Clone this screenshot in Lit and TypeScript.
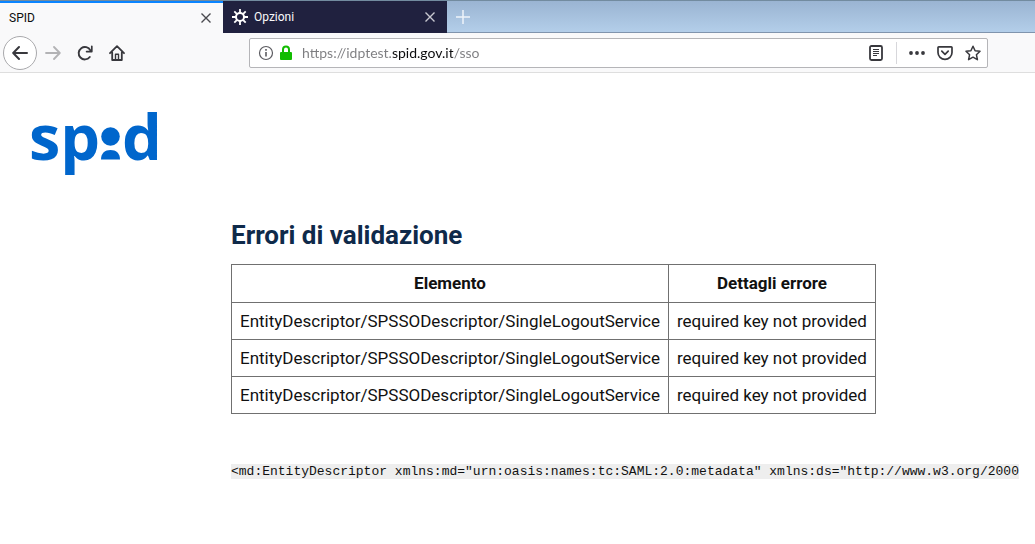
import { LitElement, html, css } from "lit";
import { customElement, state } from "lit/decorators.js";

const closeIcon = html`<svg width="12" height="12" viewBox="0 0 12 12" fill="none" stroke="currentColor" stroke-width="1.4" aria-hidden="true">
  <path d="M1.5 1.5l9 9M10.5 1.5l-9 9" />
</svg>`;

@customElement("browser-tabs")
export class BrowserTabs extends LitElement {
  static styles = css`
    :host {
      display: block;
    }
    .strip {
      display: flex;
      height: 33px;
      box-sizing: border-box;
      border-top: 1px solid #728b9f;
      background: linear-gradient(#9ab4d2, #b4cfea);
      box-shadow: inset 0 -1px #8094ad;
      font: 12px/16px Roboto, sans-serif;
    }
    .tab {
      display: flex;
      align-items: center;
      flex: 0 1 224px;
      box-sizing: border-box;
      gap: 6px;
      padding: 0 11px 0 9px;
      background: #20213f;
      color: #f9f9fa;
    }
    .active {
      flex-basis: 223px;
      border-top: 2px solid #0a84ff;
      background: #f9f9fa;
      color: #0c0c0d;
    }
    .title {
      flex: 1;
    }
    button {
      display: flex;
      padding: 0;
      border: 0;
      background: none;
      color: #4a4a4f;
    }
    .tab:not(.active) button {
      color: #c8c8d0;
    }
    .strip .add {
      align-items: center;
      padding: 0 8px;
      color: #eef4fa;
    }
  `;

  render() {
    return html`<nav class="strip" aria-label="Schede">
      <div class="tab active">
        <span class="title">SPID</span>
        <button aria-label="Chiudi scheda SPID">${closeIcon}</button>
      </div>
      <div class="tab">
        <svg width="16" height="16" viewBox="0 0 16 16" fill="none" stroke="#fff" stroke-width="2" aria-hidden="true">
          <circle cx="8" cy="8" r="4" />
          <path stroke-width="1.8" d="M8 0v4M8 12v4M0 8h4M12 8h4M2.3 2.3l2.5 2.5M11.2 11.2l2.5 2.5M13.7 2.3l-2.5 2.5M4.8 11.2l-2.5 2.5" />
        </svg>
        <span class="title">Opzioni</span>
        <button aria-label="Chiudi scheda Opzioni">${closeIcon}</button>
      </div>
      <button class="add" aria-label="Nuova scheda">
        <svg width="16" height="16" viewBox="0 0 16 16" stroke="currentColor" stroke-width="1.5" aria-hidden="true">
          <path d="M8 1v14M1 8h14" />
        </svg>
      </button>
    </nav>`;
  }
}

@customElement("browser-toolbar")
export class BrowserToolbar extends LitElement {
  @state() private address = "https://idptest.spid.gov.it/sso";

  static styles = css`
    :host {
      display: block;
    }
    .bar {
      display: flex;
      align-items: center;
      height: 40px;
      padding: 0 47px 0 3px;
      border-bottom: 1px solid #dedede;
      background: #f9f9fa;
      box-sizing: border-box;
      color: #38383d;
    }
    .nav {
      display: flex;
      align-items: center;
      gap: 16px;
      flex: 0 0 246px;
    }
    button {
      display: flex;
      align-items: center;
      justify-content: center;
      padding: 0;
      border: 0;
      background: none;
      color: inherit;
    }
    .back {
      width: 34px;
      height: 34px;
      margin-right: -8px;
      box-sizing: border-box;
      border: 1px solid #a9a9ac;
      border-radius: 50%;
      background: #fff;
    }
    .forward {
      color: #b3b3b5;
    }
    .field {
      display: flex;
      align-items: center;
      flex: 1;
      gap: 4px;
      height: 30px;
      padding: 0 6px 0 8px;
      box-sizing: border-box;
      border: 1px solid #b5b5b8;
      border-radius: 2px;
      background: #fff;
    }
    .address {
      flex: 1;
      min-width: 0;
      margin-left: 4px;
      padding: 0;
      border: 0;
      outline: 0;
      font: 14px/20px Lato, sans-serif;
      color: transparent;
      caret-color: #0c0c0d;
      background: linear-gradient(90deg, #7d7d80 89px, #0c0c0d 89px 151px, #7d7d80 151px);
      -webkit-background-clip: text;
      background-clip: text;
    }
    .actions {
      display: flex;
      align-items: center;
      gap: 12px;
    }
    .divider {
      width: 1px;
      height: 22px;
      background: #d7d7db;
    }
  `;

  render() {
    return html`<div class="bar">
      <div class="nav">
        <button class="back" aria-label="Indietro">
          <svg width="16" height="16" viewBox="0 0 16 16" fill="none" stroke="currentColor" stroke-width="2" stroke-linecap="round" stroke-linejoin="round"><path d="M15 8H1.5M7 2L1.2 8L7 14" /></svg>
        </button>
        <button class="forward" aria-label="Avanti">
          <svg width="16" height="16" viewBox="0 0 16 16" fill="none" stroke="currentColor" stroke-width="1.8" stroke-linecap="round" stroke-linejoin="round"><path d="M1 8h13.5M9 2l5.8 6L9 14" /></svg>
        </button>
        <button aria-label="Ricarica">
          <svg width="16" height="16" viewBox="0 0 16 16" fill="none" stroke="currentColor" stroke-width="1.9" stroke-linecap="round"><path d="M12.8 12A6.2 6.2 0 1 1 13.4 5.4" /><path d="M14.8 1.3V6.600H9.600" stroke-linejoin="round" stroke-width="1.7" /></svg>
        </button>
        <button aria-label="Pagina iniziale">
          <svg width="16" height="16" viewBox="0 0 16 16" fill="none" stroke="currentColor" stroke-width="1.8" stroke-linecap="round" stroke-linejoin="round"><path d="M1 8.2L8 1.2L15 8.2M3.2 7.5V15H12.8V7.5" /><path d="M6.5 15V9.2H9.5V15" stroke-width="1.4" /></svg>
        </button>
      </div>
      <div class="field">
        <svg width="16" height="16" viewBox="0 0 16 16" fill="none" stroke="#5b5b60" aria-hidden="true"><circle cx="8" cy="8" r="6.5" stroke-width="1.2" /><path d="M8 7v4.5M8 4v1.7" stroke-width="1.6" /></svg>
        <svg width="16" height="16" viewBox="0 0 16 16" fill="none" aria-hidden="true"><path d="M5 8V4.500a3 3 0 0 1 6 0V8" stroke="#12bc00" stroke-width="2" /><rect x="2" y="7" width="12" height="8" rx="1" fill="#12bc00" /></svg>
        <input
          class="address"
          type="text"
          aria-label="Indirizzo"
          spellcheck="false"
          .value=${this.address}
          @input=${(e: Event) => (this.address = (e.target as HTMLInputElement).value)}
        />
        <div class="actions">
          <button aria-label="Modalità lettura">
            <svg width="16" height="16" viewBox="0 0 16 16" fill="none" stroke="currentColor"><rect x="2" y="1" width="12" height="14" rx="1.500" stroke-width="1.8" /><path d="M5 4.500h6M5 6.500h6M5 8.500h6M5 10.500h4" /></svg>
          </button>
          <span class="divider"></span>
          <button aria-label="Azioni">
            <svg width="16" height="16" viewBox="0 0 16 16" fill="currentColor"><circle cx="2" cy="8" r="1.900" /><circle cx="8" cy="8" r="1.900" /><circle cx="14" cy="8" r="1.900" /></svg>
          </button>
          <button aria-label="Salva in Pocket">
            <svg width="16" height="16" viewBox="0 0 16 16" fill="none" stroke="currentColor" stroke-width="1.7" stroke-linecap="round" stroke-linejoin="round"><path d="M1 2.500Q1 1.800 1.800 1.800H14.200Q15 1.800 15 2.500V7.500A7 6.800 0 0 1 1 7.500Z" /><path d="M4.800 6.200L8 9.300L11.200 6.200" /></svg>
          </button>
          <button aria-label="Aggiungi ai segnalibri">
            <svg width="16" height="16" viewBox="0 0 16 16" fill="none" stroke="currentColor" stroke-width="1.5" stroke-linejoin="round"><path d="M8 1.200L10.100 5.700L15 6.300L11.400 9.700L12.400 14.700L8 12.200L3.600 14.700L4.600 9.700L1 6.300L5.900 5.700Z" /></svg>
          </button>
        </div>
      </div>
    </div>`;
  }
}

interface ValidationError {
  element: string;
  detail: string;
}

@customElement("app-root")
export class AppRoot extends LitElement {
  private errors: ValidationError[] = Array.from({ length: 3 }, () => ({
    element: "EntityDescriptor/SPSSODescriptor/SingleLogoutService",
    detail: "required key not provided",
  }));

  private metadata =
    '<md:EntityDescriptor xmlns:md="urn:oasis:names:tc:SAML:2.0:metadata" xmlns:ds="http://www.w3.org/2000';

  static styles = css`
    :host {
      display: block;
      min-height: 100vh;
      overflow: hidden;
      background: #fff;
      color: #111;
      font: 17px/20px Roboto, sans-serif;
    }
    .brand {
      display: block;
      padding: 17px 24px 0;
    }
    .logo {
      display: block;
      font: bold 63px "Open Sans", sans-serif;
      fill: #0066cc;
    }
    .content {
      padding: 37px 8px 32px 231px;
    }
    h1 {
      margin: 0 0 11px;
      font-size: 26px;
      line-height: 36px;
      font-weight: 700;
      color: #0f2a4a;
    }
    table {
      border-collapse: collapse;
    }
    th,
    td {
      padding: 8px;
      border: 1px solid #707070;
      text-align: left;
      white-space: nowrap;
    }
    th {
      line-height: 21px;
      text-align: center;
    }
    pre {
      margin: 50px 0 0;
      font: 13px/15px "Liberation Mono", monospace;
    }
    code {
      font: inherit;
      display: inline-block;
      background: #eee;
    }
  `;

  render() {
    return html`
      <browser-tabs></browser-tabs>
      <browser-toolbar></browser-toolbar>
      <header class="brand">
        <svg class="logo" width="144" height="90" viewBox="24 90 144 90" role="img" aria-label="spid">
          <text x="29" y="160">sp</text>
          <circle cx="110.500" cy="136.500" r="9.300" />
          <path d="M101 159.500C101 153 105 150 110.500 150S120 153 120 159.500Z" />
          <text x="122" y="160">d</text>
        </svg>
      </header>
      <main class="content">
        <h1>Errori di validazione</h1>
        <table>
          <thead>
            <tr>
              <th scope="col">Elemento</th>
              <th scope="col">Dettagli errore</th>
            </tr>
          </thead>
          <tbody>
            ${this.errors.map(
              (e) => html`<tr>
                <td>${e.element}</td>
                <td>${e.detail}</td>
              </tr>`
            )}
          </tbody>
        </table>
        <pre><code>${this.metadata}</code></pre>
      </main>
    `;
  }
}
